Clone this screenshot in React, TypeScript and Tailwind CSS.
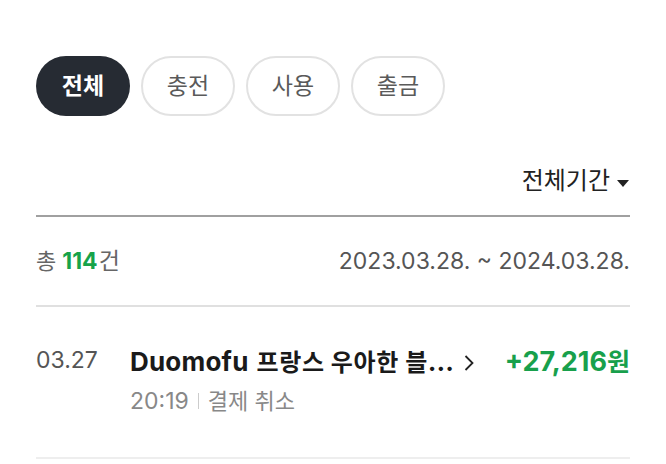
import React from "react";

const font = { fontFamily: 'Inter, "Noto Sans CJK KR", "Noto Sans", sans-serif' };

export default function App() {
  const tabs = ["전체", "충전", "사용", "출금"];
  return (
    <div className="w-[666px] h-[464px] bg-white overflow-hidden" style={font}>
      <div className="px-[36px] pt-[56px]">
        <div className="flex gap-[11px]">
          {tabs.map((t, i) => (
            <div
              key={t}
              className={
                i === 0
                  ? "w-[94px] h-[60px] rounded-full bg-[#262b33] text-white font-bold text-[23px] flex items-center justify-center"
                  : "w-[94px] h-[60px] rounded-full border-2 border-[#e2e2e2] text-[#5a5a5a] text-[23px] flex items-center justify-center"
              }
            >
              {t}
            </div>
          ))}
        </div>
        <div className="flex justify-end items-center mt-[47px] h-[36px]">
          <span className="text-[24px] text-[#222]">전체기간</span>
          <svg width="14" height="10" viewBox="0 0 14 10" className="ml-[6px] mt-[3px]">
            <path d="M1 2 L13 2 L7 9 Z" fill="#222" />
          </svg>
        </div>
        <div className="h-[2px] bg-[#a0a0a0] mt-[16px]" />
        <div className="flex justify-between items-center h-[88px] text-[22px] text-[#666]">
          <span className="flex items-baseline">
            <span>총</span>
            <span className="text-[#16a34a] font-bold text-[23px] ml-[6px] mr-[1px]">114</span>
            <span className="text-[23px]">건</span>
          </span>
          <span className="text-[23px] text-[#555]">2023.03.28. ~ 2024.03.28.</span>
        </div>
        <div className="h-[2px] bg-[#e0e0e0]" />
        <div className="flex pt-[38px] h-[150px]">
          <div className="w-[94px] text-[23px] text-[#555] leading-[30px]">03.27</div>
          <div className="flex-1">
            <div className="flex items-center font-bold text-[#1a1a1a] leading-[34px]">
              <span className="flex items-baseline">
                <span className="text-[26px] tracking-[0.2px]">Duomofu</span>
                <span className="text-[24px] ml-[8px] tracking-[0.6px]">프랑스 우아한 블</span>
                <span className="text-[26px]">...</span>
              </span>
              <svg width="12" height="20" viewBox="0 0 12 20" className="ml-[9px]">
                <path d="M2.5 3 L9.5 10 L2.5 17" stroke="#222" strokeWidth="1.8" fill="none" />
              </svg>
            </div>
            <div className="flex items-center text-[22px] text-[#888] mt-[4px]">
              <span className="text-[23px]">20:19</span>
              <span className="w-[1px] h-[16px] bg-[#ccc] mx-[9px]" />
              <span>결제 취소</span>
            </div>
          </div>
          <div className="flex items-baseline font-bold text-[#18a04c] leading-[34px]">
            <span className="text-[27px]">+27,216</span>
            <span className="text-[25px]">원</span>
          </div>
        </div>
        <div className="h-[2px] bg-[#eeeeee]" />
      </div>
    </div>
  );
}
